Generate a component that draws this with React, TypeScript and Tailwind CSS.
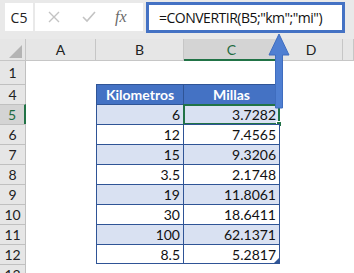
const rows = [
  { n: "5", km: "6", mi: "3.7282" },
  { n: "6", km: "12", mi: "7.4565" },
  { n: "7", km: "15", mi: "9.3206" },
  { n: "8", km: "3.5", mi: "2.1748" },
  { n: "9", km: "19", mi: "11.8061" },
  { n: "10", km: "30", mi: "18.6411" },
  { n: "11", km: "100", mi: "62.1371" },
  { n: "12", km: "8.5", mi: "5.2817" },
]

function FormulaBar() {
  return (
    <div className="flex h-[39px] items-start bg-[#e9e9e9] pt-[3px] font-['Open_Sans',sans-serif]">
      <div className="ml-[5px] flex h-[28px] w-[28px] items-center justify-center bg-white text-[14px] text-[#222]">C5</div>
      <div className="ml-[2px] flex h-[28px] w-[108px] items-center bg-white">
        <svg className="ml-[13px]" width="12" height="12" viewBox="0 0 12 12">
          <path d="M1 1L11 11M11 1L1 11" stroke="#c3c3c3" strokeWidth="1.4" />
        </svg>
        <svg className="ml-[22px]" width="14" height="12" viewBox="0 0 14 12">
          <path d="M1 6L5 10L13 1" stroke="#c3c3c3" strokeWidth="1.6" fill="none" />
        </svg>
        <span className="ml-[19px] font-['Liberation_Serif',serif] text-[16px] italic text-[#6a6a6a]">fx</span>
      </div>
      <div className="ml-[3px] -mt-[1px] flex h-[31px] w-[199px] items-center overflow-hidden whitespace-nowrap border-[3px] border-[#4472c4] bg-white pl-[10px] text-[14px] tracking-[-0.5px] text-[#111]">
        =CONVERTIR(B5;"km";"mi")
      </div>
    </div>
  )
}

function ColHead({ label, active }: { label: string; active?: boolean }) {
  return (
    <div
      className={
        active
          ? "flex items-center justify-center border-b-2 border-r border-b-[#217346] border-r-[#c6c6c6] bg-[#d4d4d4] text-[#1e6b41]"
          : "flex items-center justify-center border-b border-r border-[#c6c6c6] bg-[#e6e6e6] text-[#222]"
      }
    >
      {label}
    </div>
  )
}

function RowHead({ n, active }: { n: string; active?: boolean }) {
  return (
    <div
      className={
        active
          ? "flex items-center justify-center border-r-2 border-t border-r-[#217346] border-t-[#c0c0c0] bg-[#d4d4d4] text-[#1e6b41]"
          : "flex items-center justify-center border-r border-t border-[#c0c0c0] bg-[#e6e6e6] text-[#222]"
      }
    >
      {n}
    </div>
  )
}

export default function App() {
  return (
    <div className="relative h-[273px] w-[354px] overflow-hidden bg-white">
      <FormulaBar />
      <div className="grid grid-cols-[26px_70px_88px_96px_63px_1fr] grid-rows-[22px_23px_repeat(9,20px)_9px] font-['Lato',sans-serif] text-[14px]">
        <div className="relative border-b border-r border-[#c6c6c6] bg-[#e6e6e6]">
          <svg className="absolute bottom-[2px] right-[3px]" width="13" height="13" viewBox="0 0 13 13">
            <path d="M13 0V13H0Z" fill="#b4b4b4" />
          </svg>
        </div>
        <ColHead label="A" />
        <ColHead label="B" />
        <ColHead label="C" active />
        <ColHead label="D" />
        <ColHead label="" />

        <div className="flex items-center justify-center border-r border-[#c0c0c0] bg-[#e6e6e6] text-[#222]">1</div>
        <div className="col-span-5" />

        <RowHead n="4" />
        <div />
        <div className="flex items-center justify-center border-l border-r border-t border-[#2f5496] bg-[#4472c4] font-bold text-white">
          Kilometros
        </div>
        <div className="flex items-center justify-center border-r border-t border-[#2f5496] bg-[#4472c4] font-bold text-white">
          Millas
        </div>
        <div className="col-span-2" />

        {rows.map((r, i) => {
          const fill = i % 2 === 0 ? "bg-[#d9e1f2]" : "bg-white"
          const last = i === rows.length - 1
          return [
            <RowHead key={r.n + "h"} n={r.n} active={i === 0} />,
            <div key={r.n + "a"} />,
            <div
              key={r.n + "b"}
              className={`flex items-center justify-end border-l border-r border-t border-[#2f5496] pr-[3px] text-[#111] ${fill} ${last ? "border-b" : ""}`}
            >
              {r.km}
            </div>,
            <div
              key={r.n + "c"}
              className={`relative flex items-center justify-end border-r border-t border-[#2f5496] pr-[3px] text-[#111] ${fill} ${last ? "border-b" : ""}`}
            >
              {r.mi}
              {i === 0 && (
                <>
                  <div className="absolute -bottom-[1px] -left-[1px] -right-[1px] -top-[1px] border-2 border-[#217346]" />
                  <div className="absolute -bottom-[3px] -right-[3px] h-[6px] w-[6px] border border-white bg-[#217346]" />
                </>
              )}
              {last && (
                <svg className="absolute bottom-0 right-0" width="5" height="5" viewBox="0 0 5 5">
                  <path d="M5 0V5H0Z" fill="#2f5496" />
                </svg>
              )}
            </div>,
            <div key={r.n + "d"} className="col-span-2" />,
          ]
        })}

        <div className="flex justify-center overflow-hidden border-r border-t border-[#c0c0c0] bg-[#e6e6e6] pt-[3px] leading-[14px] text-[#222]">
          13
        </div>
        <div className="col-span-5" />
      </div>

      <svg className="absolute left-[268px] top-[34px]" width="22" height="76" viewBox="0 0 22 76">
        <path d="M11 0L21 21H14.5V74H7.5V21H1Z" fill="#4f7fd2" stroke="#3f6dbf" strokeWidth="1" />
      </svg>
    </div>
  )
}
